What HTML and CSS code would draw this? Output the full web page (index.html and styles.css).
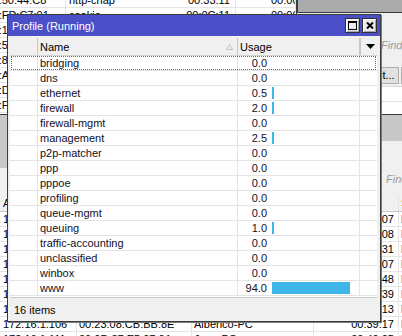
FILE: index.html
```html
<!DOCTYPE html>
<html>
<head>
<meta charset="utf-8">
<title>Profile (Running)</title>
<link rel="stylesheet" href="styles.css">
</head>
<body>
<div class="desk">

  <!-- back window: leases, top left -->
  <div class="win leases">
    <div class="ltab">
      <div class="lrow"><span class="c1">00:0C:42:50:44:C8</span><span class="c2">http-chap</span><span class="c3">00:33:11</span><span class="c4">00:00:00</span></div>
      <div class="lrow"><span class="c1">00:0C:42:FD:C7:01</span><span class="c2">cookie</span><span class="c3">00:0C:11</span><span class="c4">00:00:00</span></div>
      <div class="lrow"><span class="c1">00:0C:42:12:A0:3B</span><span class="c2">cookie</span><span class="c3">00:12:40</span><span class="c4">00:00:00</span></div>
      <div class="lrow"><span class="c1">00:0C:42:56:1E:90</span><span class="c2">cookie</span><span class="c3">00:08:02</span><span class="c4">00:00:00</span></div>
      <div class="lrow"><span class="c1">00:0C:42:8C:D1:07</span><span class="c2">cookie</span><span class="c3">00:21:55</span><span class="c4">00:00:00</span></div>
      <div class="lrow"><span class="c1">00:0C:42:A9:0F:14</span><span class="c2">cookie</span><span class="c3">00:03:19</span><span class="c4">00:00:00</span></div>
      <div class="lrow"><span class="c1">00:0C:42:D9:33:6A</span><span class="c2">cookie</span><span class="c3">00:17:48</span><span class="c4">00:00:00</span></div>
      <div class="lrow"><span class="c1">00:0C:42:F5:8B:2E</span><span class="c2">cookie</span><span class="c3">00:29:06</span><span class="c4">00:00:00</span></div>
    </div>
  </div>

  <!-- back window: top right -->
  <div class="win side">
    <div class="side-bar"><span class="find">Find</span></div>
    <div class="side-tools"><span class="sbtn">Set...</span><span class="sbtn">B</span></div>
    <div class="side-row"></div>
    <div class="side-row"></div>
  </div>

  <!-- back window: dhcp leases, bottom -->
  <div class="win hosts">
    <div class="hosts-title"></div>
    <div class="hosts-bar">
      <span class="hosts-tools"></span>
      <span class="find">Find</span>
    </div>
    <div class="hrow hhead"><span>Address</span><span>MAC Address</span><span>Host Name</span><span>Expires After</span><span>S</span></div>
    <div class="hrow"><span>172.16.1.101</span><span>00:1E:8C:4A:21:07</span><span>Maria-PC</span><span>00:41:07</span><span>b</span></div>
    <div class="hrow"><span>172.16.1.102</span><span>00:24:21:9C:33:B1</span><span>Jose-PC</span><span>00:45:08</span><span>b</span></div>
    <div class="hrow"><span>172.16.1.103</span><span>00:1F:16:0E:5D:22</span><span>Carlos-PC</span><span>00:32:31</span><span>b</span></div>
    <div class="hrow"><span>172.16.1.104</span><span>00:26:18:7A:C4:90</span><span>Laura-PC</span><span>00:48:07</span><span>b</span></div>
    <div class="hrow"><span>172.16.1.105</span><span>00:21:70:B2:19:4C</span><span>Pedro-PC</span><span>00:36:48</span><span>b</span></div>
    <div class="hrow"><span>172.16.1.107</span><span>00:19:D1:0B:6E:3A</span><span>Ana-PC</span><span>00:27:39</span><span>b</span></div>
    <div class="hrow"><span>172.16.1.108</span><span>00:22:15:F4:80:5D</span><span>Luis-PC</span><span>00:30:13</span><span>b</span></div>
    <div class="hrow"><span>172.16.1.106</span><span>00:23:08:CB:BB:8E</span><span>Alberico-PC</span><span>00:39:17</span><span>b</span></div>
    <div class="hrow"><span>172.16.1.111</span><span>00:0D:87:E5:07:0A</span><span>Juan-PC</span><span>00:40:05</span><span>b</span></div>
  </div>

  <!-- front window -->
  <div class="win profile">
    <div class="title">
      <span class="title-text">Profile (Running)</span>
      <span class="tbtn"><svg width="9" height="9" viewBox="0 0 9 9"><rect x="0.5" y="0.5" width="8" height="8" fill="none" stroke="#000"/><rect x="0" y="0" width="9" height="2" fill="#000"/></svg></span>
      <span class="tbtn"><svg width="8" height="7" viewBox="0 0 8 7"><path d="M1 0.5 L7 6.5 M7 0.5 L1 6.5" stroke="#000" stroke-width="2"/></svg></span>
    </div>
    <div class="frame">
      <div class="list">
        <div class="grid hdr">
          <span class="cell"></span>
          <span class="cell name-h">Name<svg width="7" height="6" viewBox="0 0 7 6"><path d="M3.5 0.5 L6.5 5.5 L0.5 5.5 Z" fill="none" stroke="#c4c4c4"/></svg></span>
          <span class="cell">Usage</span>
          <span class="cell drop"><svg width="9" height="5" viewBox="0 0 9 5"><path d="M0 0 H9 L4.5 5 Z" fill="#000"/></svg></span>
        </div>
        <div class="grid row focus"><span class="cell"></span><span class="cell">bridging</span><span class="cell use"><span class="val">0.0</span></span><span class="cell"></span></div>
        <div class="grid row"><span class="cell"></span><span class="cell">dns</span><span class="cell use"><span class="val">0.0</span></span><span class="cell"></span></div>
        <div class="grid row"><span class="cell"></span><span class="cell">ethernet</span><span class="cell use"><span class="val">0.5</span><span class="bar" style="width:2px"></span></span><span class="cell"></span></div>
        <div class="grid row"><span class="cell"></span><span class="cell">firewall</span><span class="cell use"><span class="val">2.0</span><span class="bar" style="width:2px"></span></span><span class="cell"></span></div>
        <div class="grid row"><span class="cell"></span><span class="cell">firewall-mgmt</span><span class="cell use"><span class="val">0.0</span></span><span class="cell"></span></div>
        <div class="grid row"><span class="cell"></span><span class="cell">management</span><span class="cell use"><span class="val">2.5</span><span class="bar" style="width:2px"></span></span><span class="cell"></span></div>
        <div class="grid row"><span class="cell"></span><span class="cell">p2p-matcher</span><span class="cell use"><span class="val">0.0</span></span><span class="cell"></span></div>
        <div class="grid row"><span class="cell"></span><span class="cell">ppp</span><span class="cell use"><span class="val">0.0</span></span><span class="cell"></span></div>
        <div class="grid row"><span class="cell"></span><span class="cell">pppoe</span><span class="cell use"><span class="val">0.0</span></span><span class="cell"></span></div>
        <div class="grid row"><span class="cell"></span><span class="cell">profiling</span><span class="cell use"><span class="val">0.0</span></span><span class="cell"></span></div>
        <div class="grid row"><span class="cell"></span><span class="cell">queue-mgmt</span><span class="cell use"><span class="val">0.0</span></span><span class="cell"></span></div>
        <div class="grid row"><span class="cell"></span><span class="cell">queuing</span><span class="cell use"><span class="val">1.0</span><span class="bar" style="width:2px"></span></span><span class="cell"></span></div>
        <div class="grid row"><span class="cell"></span><span class="cell">traffic-accounting</span><span class="cell use"><span class="val">0.0</span></span><span class="cell"></span></div>
        <div class="grid row"><span class="cell"></span><span class="cell">unclassified</span><span class="cell use"><span class="val">0.0</span></span><span class="cell"></span></div>
        <div class="grid row"><span class="cell"></span><span class="cell">winbox</span><span class="cell use"><span class="val">0.0</span></span><span class="cell"></span></div>
        <div class="grid row"><span class="cell"></span><span class="cell">www</span><span class="cell use"><span class="val">94.0</span><span class="bar" style="width:78px"></span></span><span class="cell"></span></div>
      </div>
      <div class="status">16 items</div>
    </div>
  </div>

</div>
</body>
</html>
```

FILE: styles.css
```css
* {
	box-sizing: border-box;
}
body {
	margin: 0;
	background: #ababab;
	font-family: "Liberation Sans", Arial, sans-serif;
	font-size: 11px;
	color: #000;
}
.desk {
	position: relative;
	width: 402px;
	height: 336px;
	overflow: hidden;
}
.win {
	position: absolute;
	background: #f0f0f0;
	border: 1px solid #3c3c3c;
	overflow: hidden;
}
.find {
	font-style: italic;
	color: #9a9a9a;
}

/* leases window, top left */
.leases {
	left: -60px;
	top: -40px;
	width: 358px;
	height: 156px;
	padding-top: 32px;
	background: #fff;
	border-width: 1px 2px 2px 1px;
}
.lrow {
	display: grid;
	grid-template-columns: 125px 85px 85px 1fr;
	height: 15px;
	border-bottom: 1px solid #e4e4e4;
	white-space: nowrap;
}
.lrow span {
	border-right: 1px solid #e4e4e4;
	padding: 0 3px 0 13px;
	line-height: 14px;
	overflow: hidden;
}
.lrow .c2 {
	padding-left: 3px;
	border-right-color: transparent;
}
.lrow .c3 {
	text-align: right;
	padding-right: 5px;
}
.lrow .c4 {
	padding-left: 35px;
}

/* window on the right */
.side {
	left: 296px;
	top: 12px;
	width: 140px;
	height: 104px;
	background: #fff;
}
.side-bar {
	height: 26px;
	background: #f0f0f0;
	padding: 26px 0 0 84px;
	box-sizing: content-box;
}
.side-tools {
	display: flex;
	gap: 2px;
	padding: 2px 0 2px 68px;
	background: #f0f0f0;
	border-bottom: 1px solid #d8d8d8;
}
.sbtn {
	border: 1px solid #adadad;
	background: #e1e1e1;
	padding: 1px 3px;
	line-height: 13px;
}
.side-row {
	height: 15px;
	border-bottom: 1px solid #e4e4e4;
}

/* hosts window, bottom */
.hosts {
	left: -10px;
	top: 114px;
	width: 440px;
	height: 240px;
	background: #fff;
}
.hosts-title {
	height: 26px;
	background: #c8c8c8;
}
.hosts-bar {
	height: 55px;
	background: #f0f0f0;
	display: flex;
	align-items: flex-start;
}
.hosts-tools {
	width: 40px;
	height: 27px;
	background: #c8c8c8;
}
.hosts-bar .find {
	margin: 32px 0 0 355px;
}
.hrow {
	display: grid;
	grid-template-columns: 86px 115px 122px 85px 1fr;
	height: 15px;
	border-bottom: 1px solid #e4e4e4;
	white-space: nowrap;
}
.hrow span {
	border-right: 1px solid #e4e4e4;
	padding: 0 3px 0 12px;
	line-height: 14px;
	overflow: hidden;
}
.hrow span:nth-child(2),
.hrow span:nth-child(3) {
	padding-left: 2px;
}
.hrow span:nth-child(4) {
	text-align: right;
	padding-right: 4px;
}
.hrow span:nth-child(5) {
	padding-left: 2px;
	color: #1a1a8a;
}
.hhead {
	height: 16px;
	background: #f0f0f0;
	border-bottom-color: #c8c8c8;
}
.hhead span:nth-child(4) {
	text-align: left;
	padding-left: 2px;
}
.hhead span:nth-child(5) {
	color: #d08000;
}

/* profile window */
.profile {
	left: 7px;
	top: 14px;
	width: 374px;
	height: 308px;
	display: flex;
	flex-direction: column;
	box-shadow: 1px 1px 0 #7a7a7a;
}
.title {
	height: 21px;
	background: #4b50c8;
	color: #fff;
	display: flex;
	align-items: center;
	padding: 0 3px 0 4px;
	flex: none;
}
.title-text {
	flex: 1;
}
.tbtn {
	width: 15px;
	height: 15px;
	margin-left: 2px;
	border: 1px solid #303030;
	background: #ebebeb;
	box-shadow: inset 1px 1px 0 #fff, inset -1px -1px 0 #a8a8a8;
	display: flex;
	align-items: center;
	justify-content: center;
}
.frame {
	flex: 1;
	display: flex;
	flex-direction: column;
	padding: 2px 3px 0 2px;
}
.list {
	height: 260px;
	background: #fff;
	border-bottom: 1px solid #c8c8c8;
}
.grid {
	display: grid;
	grid-template-columns: 28px 200px 122px 1fr;
}
.cell {
	border-right: 1px solid #e4e4e4;
	display: flex;
	align-items: center;
	padding-left: 2px;
	white-space: nowrap;
	color: #101028;
}
.cell:last-child {
	border-right: none;
}
.hdr {
	height: 18px;
	background: #f0f0f0;
	border-bottom: 1px solid #d4d4d4;
}
.hdr .cell {
	border-right-color: #c8c8c8;
	color: #000;
}
.hdr .cell:last-child {
	border-left: 1px solid #c8c8c8;
}
.name-h {
	justify-content: space-between;
	padding-right: 4px;
}
.drop {
	justify-content: center;
}
.row {
	height: 15px;
	border-bottom: 1px solid #e4e4e4;
}
.focus {
	position: relative;
}
.focus::after {
	content: "";
	position: absolute;
	left: 1px;
	right: 1px;
	top: 0;
	bottom: 0;
	border: 1px dotted #6c6c6c;
}
.use {
	padding-left: 0;
}
.val {
	width: 29px;
	text-align: right;
}
.bar {
	height: 12px;
	margin-left: 5px;
	background: #3fb6ea;
}
.status {
	flex: 1;
	display: flex;
	align-items: center;
	padding-left: 4px;
	color: #000;
}
```
